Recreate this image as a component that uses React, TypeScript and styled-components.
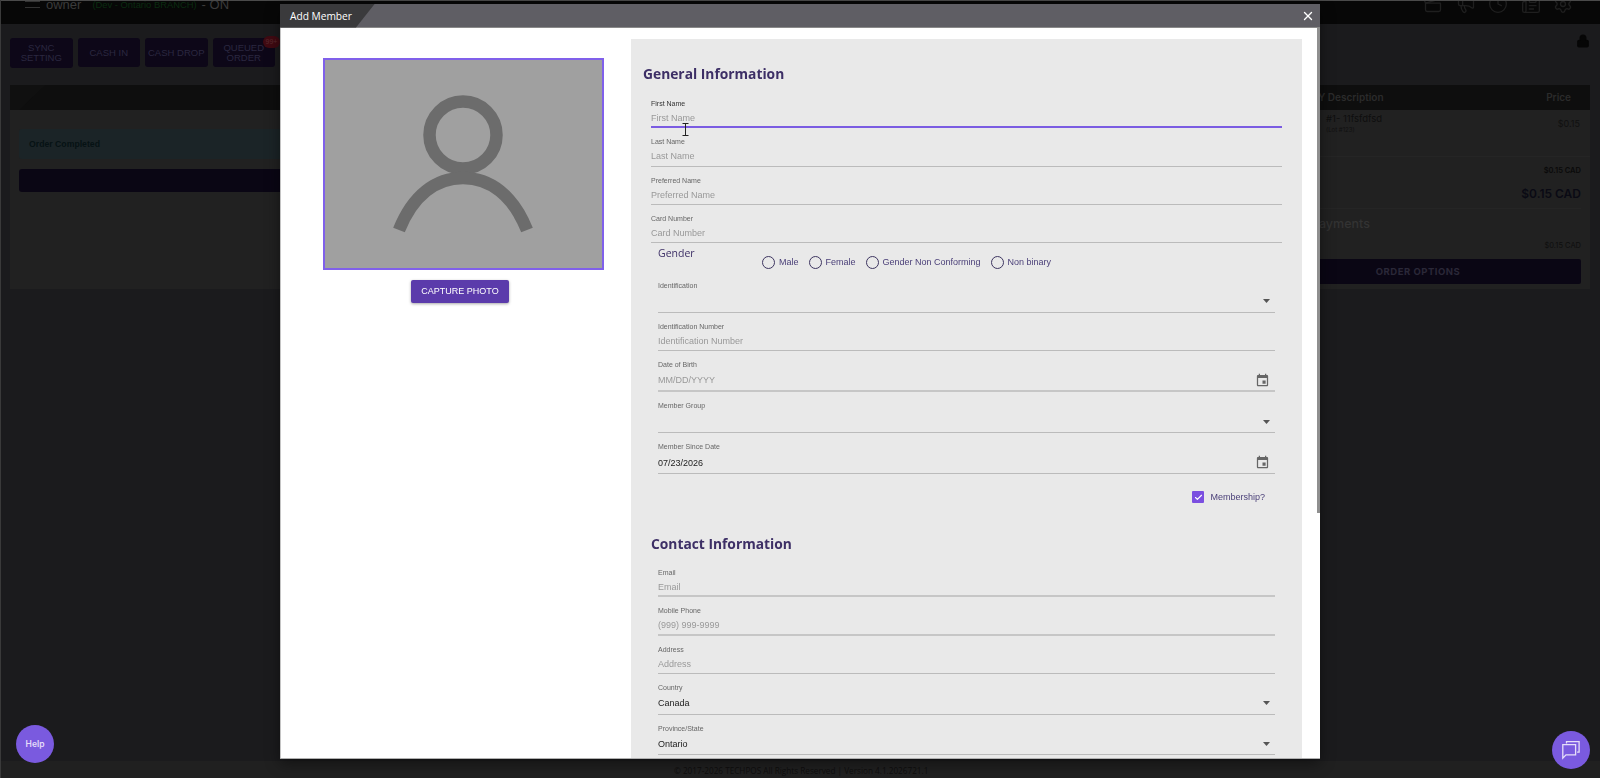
import styled, { createGlobalStyle } from 'styled-components';
import { Check, Clapperboard, Clock, Lock, Megaphone, Newspaper, Settings, X } from 'lucide-react';

const sans = '"Liberation Sans", Arial, sans-serif';
const open = '"Open Sans", "Noto Sans", sans-serif';
const inter = 'Inter, "Liberation Sans", sans-serif';

const GlobalStyle = createGlobalStyle`
  html, body {
    margin: 0;
    padding: 0;
    background: #1b1b1d;
    overflow: hidden;
  }
  * {
    box-sizing: border-box;
  }
`;

const CalendarIcon = () => (
  <svg width="15" height="15" viewBox="0 0 24 24" fill="#666">
    <path d="M17 12h-5v5h5v-5zM16 1v2H8V1H6v2H5c-1.11 0-1.99.9-1.99 2L3 19c0 1.1.89 2 2 2h14c1.1 0 2-.9 2-2V5c0-1.1-.9-2-2-2h-1V1h-2zm3 18H5V8h14v11z" />
  </svg>
);

const CaretIcon = () => (
  <svg width="7" height="4" viewBox="0 0 7 4" fill="#555">
    <path d="M0 0h7L3.5 4z" />
  </svg>
);

const PersonIcon = () => (
  <PersonSvg width="140" height="150" viewBox="0 0 140 150" fill="none" stroke="#6c6c6c" strokeWidth="12.5">
    <circle cx="70" cy="46" r="33.5" />
    <path d="M6 141C20 106 43 89 70 89s50 17 64 52" />
  </PersonSvg>
);

const ChatIcon = () => (
  <svg width="20" height="20" viewBox="0 0 20 20" fill="none" stroke="#e6def9" strokeWidth="1.3">
    <path d="M5.5 3.5V1.7h12.6v10.5h-2" />
    <path d="M1.8 4.6h12.8v10.2H5l-3.2 3.4z" />
  </svg>
);

const CursorIcon = () => (
  <svg width="7" height="13" viewBox="0 0 7 13" fill="none" stroke="#222" strokeWidth="1">
    <path d="M.5.5h6M.5 12.5h6M3.5.5v12" />
  </svg>
);

type FieldProps = {
  label: string;
  value?: string;
  placeholder?: string;
  height?: number;
  active?: boolean;
  thick?: boolean;
  kind?: 'select' | 'date';
};

const Field = ({ label, value, placeholder, height = 38.33, active, thick, kind }: FieldProps) => (
  <FieldBox $height={height} $active={active} $thick={thick}>
    <FieldLabel $active={active}>{label}</FieldLabel>
    <FieldValue $muted={!value}>
      <span>{value || placeholder}</span>
      {kind === 'select' && <CaretIcon />}
      {kind === 'date' && <CalendarIcon />}
    </FieldValue>
  </FieldBox>
);

const genders = ['Male', 'Female', 'Gender Non Conforming', 'Non binary'];
const topIcons = [Clapperboard, Megaphone, Clock, Newspaper, Settings];
const actions = ['SYNC SETTING', 'CASH IN', 'CASH DROP', 'QUEUED ORDER'];

const App = () => {
  return (
    <>
      <GlobalStyle />
      <Page>
        <TopBar>
          <TopRow>
            <Brand>
              <Burger />
              <Owner>owner</Owner>
              <Branch>(Dev - Ontario BRANCH)</Branch>
              <Owner>- ON</Owner>
            </Brand>
            <TopIcons>
              {topIcons.map((Icon, i) => (
                <Icon key={i} size={20} strokeWidth={1.6} />
              ))}
            </TopIcons>
          </TopRow>
        </TopBar>
        <Main>
          <Toolbar>
            <Actions>
              {actions.map((action) => (
                <ActionButton key={action} $tall={action === 'SYNC SETTING'}>
                  {action}
                  {action === 'QUEUED ORDER' && <Badge>99+</Badge>}
                </ActionButton>
              ))}
            </Actions>
            <LockWrap>
              <Lock size={14} fill="#060606" color="#060606" />
            </LockWrap>
          </Toolbar>
          <Columns>
            <Card>
              <CardHeader>
                <HeaderSlant />
              </CardHeader>
              <CardBody>
                <Notice>Order Completed</Notice>
                <WideButton />
              </CardBody>
            </Card>
            <Card>
              <CardHeader>
                <CartHead>
                  <span>QTY Description</span>
                  <span>Price</span>
                </CartHead>
              </CardHeader>
              <CartRow>
                <div>
                  <ItemName>#1- 11fsfdfsd</ItemName>
                  <ItemLot>(Lot #123)</ItemLot>
                </div>
                <ItemPrice>$0.15</ItemPrice>
              </CartRow>
              <Summary>
                <SubTotal>$0.15 CAD</SubTotal>
                <GrandTotal>$0.15 CAD</GrandTotal>
                <PaymentsTitle>Payments</PaymentsTitle>
                <PaymentLine>$0.15 CAD</PaymentLine>
                <OrderOptions>ORDER OPTIONS</OrderOptions>
              </Summary>
            </Card>
          </Columns>
        </Main>
        <Footer>© 2017-2026 TECHPOS All Rights Reserved | Version 4.1.2026721.1</Footer>
      </Page>

      <Modal>
        <ModalHeader>
          <ModalTitle>Add Member</ModalTitle>
          <CloseButton>
            <X size={14} strokeWidth={2.4} color="#fff" />
          </CloseButton>
        </ModalHeader>
        <ModalBody>
          <PhotoColumn>
            <PhotoFrame>
              <PersonIcon />
            </PhotoFrame>
            <CaptureButton>CAPTURE PHOTO</CaptureButton>
          </PhotoColumn>
          <FormPanel>
            <SectionTitle>General Information</SectionTitle>
            <OuterFields>
              <Field label="First Name" placeholder="First Name" active />
              <Field label="Last Name" placeholder="Last Name" />
              <Field label="Preferred Name" placeholder="Preferred Name" />
              <Field label="Card Number" placeholder="Card Number" />
            </OuterFields>
            <InnerFields>
              <GenderRow>
                <GenderTitle>Gender</GenderTitle>
                <RadioRow>
                  {genders.map((gender) => (
                    <RadioItem key={gender}>
                      <RadioCircle />
                      {gender}
                    </RadioItem>
                  ))}
                </RadioRow>
              </GenderRow>
              <Field label="Identification" height={41} kind="select" />
              <Field label="Identification Number" placeholder="Identification Number" />
              <Field label="Date of Birth" placeholder="MM/DD/YYYY" height={41} kind="date" thick />
              <Field label="Member Group" height={41} kind="select" />
              <Field label="Member Since Date" value="07/23/2026" height={41} kind="date" />
              <MembershipRow>
                <CheckBox>
                  <Check size={9} strokeWidth={3} color="#fff" />
                </CheckBox>
                Membership?
              </MembershipRow>
            </InnerFields>
            <ContactTitle>Contact Information</ContactTitle>
            <InnerFields>
              <Field label="Email" placeholder="Email" thick />
              <Field label="Mobile Phone" placeholder="(999) 999-9999" thick />
              <Field label="Address" placeholder="Address" />
              <Field label="Country" value="Canada" height={40.5} kind="select" />
              <Field label="Province/State" value="Ontario" height={40.5} kind="select" />
            </InnerFields>
          </FormPanel>
          <ScrollThumb />
          <TextCursor>
            <CursorIcon />
          </TextCursor>
        </ModalBody>
      </Modal>

      <HelpBubble>Help</HelpBubble>
      <ChatBubble>
        <ChatIcon />
      </ChatBubble>
    </>
  );
};

export default App;

const Page = styled.div`
  display: flex;
  flex-direction: column;
  width: 1600px;
  height: 778px;
  overflow: hidden;
  background: #1b1b1d;
  border-left: 1px solid #3a3a3a;
`;

const TopBar = styled.header`
  flex: none;
  height: 24px;
  overflow: hidden;
  background: #070707;
  border-top: 1px solid #4a4a4a;
`;

const TopRow = styled.div`
  display: flex;
  align-items: center;
  justify-content: space-between;
  height: 32px;
  margin-top: -13px;
  padding: 0 27px 0 24px;
`;

const Brand = styled.div`
  display: flex;
  align-items: center;
`;

const Burger = styled.span`
  width: 15px;
  height: 7px;
  margin-right: 6px;
  border-top: 1px solid #333;
  border-bottom: 1px solid #333;
`;

const Owner = styled.span`
  font: 13px ${sans};
  color: #3b3b3b;
  margin-right: 5px;
`;

const Branch = styled.span`
  font: 9.4px ${sans};
  color: #0a2c10;
  margin: 0 5px 0 6px;
`;

const TopIcons = styled.div`
  display: flex;
  gap: 12.5px;
  color: #1f1f1f;
`;

const Main = styled.main`
  flex: 1;
  padding: 14px 10px 0 9px;
`;

const Toolbar = styled.div`
  display: flex;
  justify-content: space-between;
  height: 47px;
`;

const Actions = styled.div`
  display: flex;
  align-items: flex-start;
  gap: 5px;
`;

const ActionButton = styled.div<{ $tall?: boolean }>`
  position: relative;
  display: flex;
  align-items: center;
  justify-content: center;
  width: 62.5px;
  height: ${({ $tall }) => ($tall ? 30 : 29)}px;
  border-radius: 3px;
  background: #0d0718;
  font: 9.5px/10px ${sans};
  text-align: center;
  color: #2b2840;
`;

const Badge = styled.span`
  position: absolute;
  top: -2px;
  right: -5px;
  width: 17px;
  height: 12px;
  border-radius: 6px;
  background: #400a12;
  font: 7px/12px ${sans};
  color: #5c2a30;
`;

const LockWrap = styled.div`
  margin-top: -4px;
  color: #060606;
`;

const Columns = styled.div`
  display: grid;
  grid-template-columns: 1fr 344px;
  gap: 20px;
`;

const Card = styled.section`
  display: flex;
  flex-direction: column;
  height: 204px;
  background: #212121;
`;

const CardHeader = styled.div`
  flex: none;
  height: 25px;
  background: #0e0e0e;
`;

const HeaderSlant = styled.div`
  width: 35px;
  height: 25px;
  background: #101010;
  clip-path: polygon(0 0, 100% 0, 28% 100%, 0 100%);
`;

const CardBody = styled.div`
  padding: 19px 9px 0;
`;

const Notice = styled.div`
  height: 30px;
  padding-left: 10px;
  border-radius: 3px;
  background: #1b2427;
  font: bold 8.7px/30px ${sans};
  color: #061214;
`;

const WideButton = styled.div`
  height: 23px;
  margin-top: 10px;
  border-radius: 3px;
  background: #0a0614;
`;

const CartHead = styled.div`
  display: flex;
  justify-content: space-between;
  height: 25px;
  padding: 0 19px 0 58px;
  font: 600 10px/25px ${inter};
  color: #2b2b2b;
`;

const CartRow = styled.div`
  display: flex;
  justify-content: space-between;
  height: 47px;
  padding: 3px 10px 0 80px;
  border-bottom: 1px solid #252525;
`;

const ItemName = styled.div`
  font: 9.5px/12px ${inter};
  color: #0e0e0e;
`;

const ItemLot = styled.div`
  font: 6px/9px ${inter};
  color: #101010;
`;

const ItemPrice = styled.div`
  margin-top: 5px;
  font: 9px/12px ${inter};
  color: #101010;
`;

const Summary = styled.div`
  display: flex;
  flex-direction: column;
  align-items: flex-end;
  padding: 9px 9px 0;
`;

const SubTotal = styled.div`
  font: 600 7.5px/10px ${inter};
  color: #0a0a0a;
`;

const GrandTotal = styled.div`
  align-self: stretch;
  height: 24px;
  margin-top: 8.5px;
  border-bottom: 1px solid #252525;
  text-align: right;
  font: 600 12px/18px ${inter};
  color: #0a0a14;
`;

const PaymentsTitle = styled.div`
  align-self: flex-start;
  margin: 6px 0 0 56px;
  font: 500 12.5px/18px ${inter};
  color: #333;
`;

const PaymentLine = styled.div`
  margin-top: 8.5px;
  font: 7.5px/10px ${inter};
  color: #0e0e0e;
`;

const OrderOptions = styled.div`
  align-self: stretch;
  height: 25px;
  margin-top: 8px;
  border-radius: 2px;
  background: #0a0614;
  text-align: center;
  font: 700 9.5px/25px ${inter};
  letter-spacing: 0.5px;
  color: #2a2838;
`;

const Footer = styled.footer`
  flex: none;
  height: 17px;
  padding-left: 673px;
  background: #202020;
  font: 8.2px/20px ${open};
  color: #0f0e0e;
`;

const Modal = styled.div`
  position: fixed;
  top: 4px;
  left: 280px;
  display: flex;
  flex-direction: column;
  width: 1040px;
  height: 755px;
  overflow: hidden;
  background: #fff;
  border-bottom: 1px solid #b0b0b0;
  box-shadow: 0 4px 14px rgba(0, 0, 0, 0.45);
`;

const ModalHeader = styled.div`
  flex: none;
  display: flex;
  align-items: center;
  justify-content: space-between;
  height: 24px;
  padding-right: 5px;
  background: #5f5e64;
  border-bottom: 1px solid #8a8a8a;
`;

const ModalTitle = styled.div`
  width: 95px;
  height: 24px;
  padding-left: 10px;
  background: #3a3a3c;
  clip-path: polygon(0 0, 100% 0, 80% 100%, 0 100%);
  font: 10.2px/24px ${open};
  color: #fff;
`;

const CloseButton = styled.div`
  display: flex;
`;

const ModalBody = styled.div`
  position: relative;
  flex: 1;
  display: flex;
  min-height: 0;
  padding: 11px 18px 0 0;
  border-left: 1px solid #c4c4c4;
`;

const PhotoColumn = styled.div`
  flex: none;
  display: flex;
  flex-direction: column;
  align-items: flex-start;
  width: 350px;
  padding: 19px 0 0 42px;
`;

const PhotoFrame = styled.div`
  display: flex;
  align-items: flex-start;
  justify-content: center;
  width: 281px;
  height: 212px;
  padding-top: 28.5px;
  background: #a0a0a0;
  border: 2px solid #8060ea;
`;

const PersonSvg = styled.svg`
  margin-right: 2px;
`;

const CaptureButton = styled.div`
  align-self: flex-start;
  width: 98px;
  height: 23px;
  margin: 10px 0 0 88px;
  border-radius: 2px;
  background: #5b3bab;
  box-shadow: 0 1px 3px rgba(0, 0, 0, 0.35);
  text-align: center;
  font: 9px/23px ${sans};
  color: #fff;
`;

const FormPanel = styled.div`
  flex: 1;
  min-width: 0;
  padding: 25px 20px 0 12px;
  background: #e9e9e9;
`;

const SectionTitle = styled.h2`
  margin: 0 0 6px;
  font: 700 13.8px/20px ${open};
  color: #3d2f66;
`;

const ContactTitle = styled(SectionTitle)`
  margin: 31px 0 5px 8px;
`;

const OuterFields = styled.div`
  margin-left: 8px;
`;

const InnerFields = styled.div`
  margin: 0 7px 0 15px;
`;

const FieldBox = styled.div<{ $height: number; $active?: boolean; $thick?: boolean }>`
  display: flex;
  flex-direction: column;
  height: ${({ $height }) => $height}px;
  padding-top: 9px;
  border-bottom: ${({ $active, $thick }) => ($active || $thick ? 2 : 1)}px solid
    ${({ $active, $thick }) => ($active ? '#7b5ce2' : $thick ? '#c6c6c6' : '#bbb')};
`;

const FieldLabel = styled.label<{ $active?: boolean }>`
  flex: none;
  height: 10px;
  font: 7px/10px ${sans};
  color: ${({ $active }) => ($active ? '#333' : '#666')};
`;

const FieldValue = styled.div<{ $muted: boolean }>`
  flex: 1;
  display: flex;
  align-items: center;
  justify-content: space-between;
  padding-right: 5px;
  font: 9px/14px ${sans};
  color: ${({ $muted }) => ($muted ? '#999' : '#222')};
`;

const GenderRow = styled.div`
  display: flex;
  height: 28.5px;
`;

const GenderTitle = styled.div`
  flex: none;
  width: 104px;
  margin-top: 3px;
  font: 10.5px/15px ${open};
  color: #3d2f66;
`;

const RadioRow = styled.div`
  display: flex;
  gap: 10px;
  margin-top: 12px;
`;

const RadioItem = styled.div`
  display: flex;
  align-items: center;
  gap: 4px;
  height: 14px;
  font: 9px/14px ${sans};
  color: #4a3f78;
`;

const RadioCircle = styled.span`
  width: 13px;
  height: 13px;
  border: 1.4px solid #3d3560;
  border-radius: 50%;
`;

const MembershipRow = styled.div`
  display: flex;
  align-items: center;
  justify-content: flex-end;
  gap: 6px;
  height: 12px;
  margin-top: 17px;
  padding-right: 10px;
  font: 9px/12px ${sans};
  color: #4a3f78;
`;

const CheckBox = styled.span`
  display: flex;
  align-items: center;
  justify-content: center;
  width: 12px;
  height: 12px;
  border-radius: 1px;
  background: #7b4fe0;
`;

const ScrollThumb = styled.div`
  position: absolute;
  top: 0;
  right: 0;
  width: 3px;
  height: 485px;
  background: #8f8f8f;
`;

const TextCursor = styled.div`
  position: absolute;
  top: 95px;
  left: 401px;
  line-height: 0;
`;

const HelpBubble = styled.div`
  position: fixed;
  left: 16px;
  top: 725px;
  width: 38px;
  height: 38px;
  border-radius: 50%;
  background: #7a5adf;
  text-align: center;
  font: 600 8.5px/38px ${inter};
  color: #e4dcfa;
`;

const ChatBubble = styled.div`
  position: fixed;
  left: 1552px;
  top: 731px;
  display: flex;
  align-items: center;
  justify-content: center;
  width: 38px;
  height: 38px;
  border-radius: 50%;
  background: #7a5adf;
`;
